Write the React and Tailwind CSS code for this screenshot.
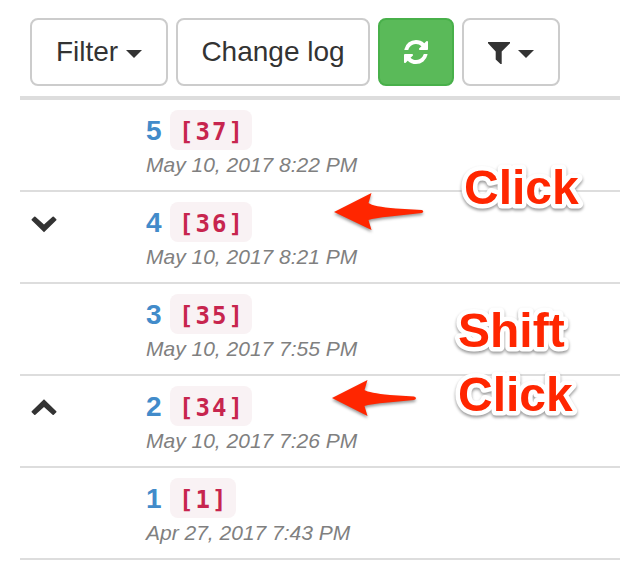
import React from "react";

const rows = [
  { n: "5", tag: "[37]", date: "May 10, 2017 8:22 PM" },
  { n: "4", tag: "[36]", date: "May 10, 2017 8:21 PM", icon: "down" },
  { n: "3", tag: "[35]", date: "May 10, 2017 7:55 PM" },
  { n: "2", tag: "[34]", date: "May 10, 2017 7:26 PM", icon: "up" },
  { n: "1", tag: "[1]", date: "Apr 27, 2017 7:43 PM" },
];

const button = "flex h-[68px] shrink-0 items-center justify-center rounded-lg border-2 border-[#ccc] bg-white text-[28px] leading-10 text-[#333]";

function Caret() {
  return (
    <svg width="16" height="8" viewBox="0 0 16 8" className="mt-1 block">
      <path d="M0 0H16L8 8Z" fill="#333" />
    </svg>
  );
}

function Chevron({ up }) {
  return (
    <svg width="26" height="18" viewBox="0 0 26 18" className={up ? "ml-[11px] mt-[22px] block" : "ml-[11px] mt-[23px] block"}>
      <path
        d={up ? "M13 1.300L25.300 13.200Q25.800 13.800 25.300 14.300L22.800 16.700Q22.200 17.200 21.600 16.700L13 9L4.400 16.700Q3.800 17.200 3.200 16.700L0.700 14.300Q0.200 13.800 0.700 13.200Z" : "M13 17.200L25.300 5.300Q25.800 4.700 25.300 4.200L22.800 1.800Q22.200 1.300 21.600 1.800L13 9.500L4.400 1.800Q3.800 1.300 3.200 1.800L0.700 4.200Q0.200 4.700 0.700 5.300Z"}
        fill="#333"
      />
    </svg>
  );
}

function Arrow({ d, className }) {
  return (
    <svg width="100" height="50" viewBox="0 0 100 50" className={className}>
      <path d={d} fill="#ff2600" />
    </svg>
  );
}

function Note({ children, className }) {
  return (
    <svg width="140" height="64" viewBox="0 0 140 64" className={"absolute overflow-visible drop-shadow-[0_2px_1.5px_rgba(0,0,0,0.4)] " + className}>
      <text
        x="6"
        y="48"
        fill="#ff2600"
        stroke="white"
        strokeWidth="9"
        strokeLinejoin="round"
        strokeLinecap="round"
        className="text-[48px] font-bold [paint-order:stroke_fill]"
      >
        {children}
      </text>
    </svg>
  );
}

export default function App() {
  return (
    <div className="relative h-[562px] w-[620px] overflow-hidden bg-white pl-5 font-['Liberation_Sans',Arial,sans-serif]">
      <div className="flex h-24 gap-2 pl-2.5 pt-[18px]">
        <button className={button + " w-[138px] gap-2"}>
          <span>Filter</span>
          <Caret />
        </button>
        <button className={button + " w-[194px]"}>Change log</button>
        <button className="flex h-[68px] w-[76px] items-center justify-center rounded-lg border-2 border-[#48b04a] bg-[#5aba59]">
          <svg width="24" height="24" viewBox="0 0 1536 1536" fill="white">
            <path d="M1511 928q0 5-1 7-64 268-268 434.500T764 1536q-146 0-282.500-55T238 1324l-129 129q-19 19-45 19t-45-19-19-45V960q0-26 19-45t45-19h448q26 0 45 19t19 45-19 45l-137 137q71 66 161 102t187 36q134 0 250-65t186-179q11-17 53-117 8-23 30-23h192q13 0 22.500 9.500t9.500 22.500zm25-800v448q0 26-19 45t-45 19h-448q-26 0-45-19t-19-45 19-45l138-138Q969 256 768 256q-134 0-250 65T332 500q-11 17-53 117-8 23-30 23H50q-13 0-22.500-9.500T18 608v-7q65-268 270-434.500T768 0q146 0 284 55.500T1297 212l130-129q19-19 45-19t45 19 19 45z" />
          </svg>
        </button>
        <button className={button + " w-[98px] gap-2"}>
          <svg width="22" height="22" viewBox="0 0 22 22" fill="#333" className="mt-0.5">
            <path d="M0 0H22V1.200L13.700 9.500V22H12.500L7.700 17.500V9.500L0 1.200Z" />
          </svg>
          <Caret />
        </button>
      </div>
      <div className="border-t-4 border-[#ddd]">
        {rows.map((row) => (
          <div key={row.n} className="flex h-[92px] border-b-2 border-[#ddd]">
            <div className="w-[126px] shrink-0">{row.icon && <Chevron up={row.icon === "up"} />}</div>
            <div>
              <div className="flex h-[50px] items-start gap-2 pt-[10px]">
                <span className="mt-px w-4 text-[28px] leading-10 font-bold text-[#428bca]">{row.n}</span>
                <code className="h-10 rounded-lg bg-[#f9f2f4] pr-[7px] pl-[9px] pt-[2px] font-['DejaVu_Sans_Mono',monospace] text-[24px] leading-10 font-bold tracking-[2.050px] text-[#c7254e]">{row.tag}</code>
              </div>
              <div className="whitespace-nowrap text-[21px] leading-[30px] text-[#808080] italic">{row.date}</div>
            </div>
          </div>
        ))}
      </div>
      <Arrow
        className="absolute left-[330px] top-[190px] drop-shadow-[0_2px_1.5px_rgba(0,0,0,0.4)]"
        d="M4 22L41.500 3L38.500 13Q43 16.500 66 18.500L92 20Q94.500 21.500 92 23L60 26.500Q44 28 38.500 30L41.500 40Z"
      />
      <Arrow
        className="absolute left-[328px] top-[376px] drop-shadow-[0_2px_1.5px_rgba(0,0,0,0.4)]"
        d="M4 22L39.500 4L36.500 14Q41 17 62 19L86 20.500Q90 22 86 24L60 26.500Q42 28 36.500 30L39.500 40Z"
      />
      <Note className="left-[458px] top-[156px]">Click</Note>
      <Note className="left-[452px] top-[299px]">Shift</Note>
      <Note className="left-[452px] top-[363px]">Click</Note>
    </div>
  );
}
